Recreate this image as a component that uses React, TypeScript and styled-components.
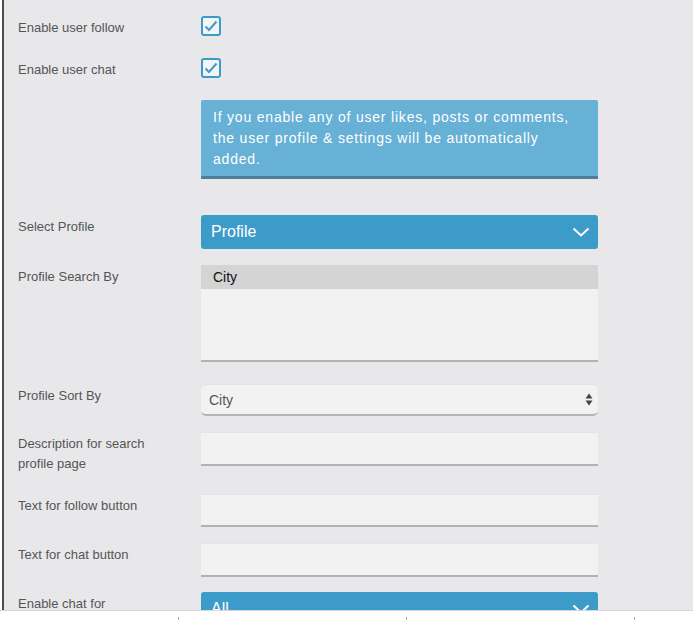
import React from "react";
import styled, { createGlobalStyle } from "styled-components";

const GlobalStyle = createGlobalStyle`
  html, body {
    margin: 0;
    padding: 0;
    background: #ffffff;
  }
  body {
    font-family: "Liberation Sans", Arial, sans-serif;
  }
`;

const Screen = styled.div`
  width: 693px;
  height: 620px;
  display: flex;
  flex-direction: column;
  overflow: hidden;
`;

const Panel = styled.div`
  height: 610px;
  flex-shrink: 0;
  overflow: hidden;
  background: #e8e8ea;
  margin-left: 2px;
  border-left: 2px solid #4d4d4d;
  padding: 16px 0 0 14px;
  box-sizing: border-box;
`;

const Row = styled.div<{ $after: number }>`
  display: grid;
  grid-template-columns: 183px 397px;
  align-items: start;
  margin-bottom: ${(p) => p.$after}px;
`;

const Label = styled.div`
  padding-top: 2px;
  font-size: 13px;
  line-height: 20px;
  color: #555555;
`;

const CheckBox = styled.span`
  width: 20px;
  height: 20px;
  box-sizing: border-box;
  border: 2px solid #3d9bcb;
  border-radius: 3px;
  background: #f4f4f4;
  display: flex;
  align-items: center;
  justify-content: center;
`;

const InfoBox = styled.div`
  background: #67b0d6;
  border-bottom: 3px solid #4b7f9c;
  border-radius: 2px 2px 0 0;
  padding: 7px 12px 6px 12px;
  color: #ffffff;
  font-size: 14px;
  line-height: 21px;
  letter-spacing: 0.8px;
`;

const BlueSelect = styled.div`
  height: 34px;
  background: #3d9bca;
  border-radius: 3px;
  display: flex;
  align-items: center;
  justify-content: space-between;
  padding: 0 8px 0 10px;
  color: #ffffff;
  font-size: 16px;
`;

const ListBox = styled.div`
  height: 97px;
  background: #f2f2f2;
  border-bottom: 2px solid #b2b2b2;
  box-sizing: border-box;
`;

const ListItem = styled.div<{ $selected?: boolean }>`
  height: 24px;
  line-height: 24px;
  padding-left: 12px;
  font-size: 14px;
  color: #111111;
  background: ${(p) => (p.$selected ? "#d4d4d4" : "transparent")};
`;

const PlainSelect = styled.div`
  height: 32px;
  box-sizing: border-box;
  background: #f2f2f2;
  border-radius: 5px;
  border-top: 1px solid #e2e2e2;
  border-bottom: 2px solid #b4b4b4;
  display: flex;
  align-items: center;
  justify-content: space-between;
  padding: 0 5px 0 8px;
  font-size: 14px;
  color: #555555;
`;

const TextInput = styled.div<{ $height: number }>`
  height: ${(p) => p.$height}px;
  box-sizing: border-box;
  background: #f2f2f2;
  border-top: 1px solid #e4e4e4;
  border-bottom: 2px solid #b2b2b2;
`;

const Footer = styled.div`
  flex: 1;
  background: #ffffff;
  border-top: 1px solid #d6d6d6;
  display: flex;
  padding-left: 178px;
`;

const Tick = styled.div`
  flex: 0 0 227px;
  height: 3px;
  margin-top: 6px;
  border-left: 1px solid #a8a8a8;
`;

const Check = () => (
  <svg width="14" height="12" viewBox="0 0 14 12">
    <polyline
      points="1.5,6.5 5,10 12.5,1.5"
      fill="none"
      stroke="#3d9bcb"
      strokeWidth="2"
    />
  </svg>
);

const Chevron = () => (
  <svg width="18" height="10" viewBox="0 0 18 10">
    <polyline
      points="1.5,1.5 9,8.5 16.5,1.5"
      fill="none"
      stroke="#ffffff"
      strokeWidth="2"
    />
  </svg>
);

const UpDown = () => (
  <svg width="8" height="13" viewBox="0 0 8 13">
    <polygon points="4,0.5 7.5,5.5 0.5,5.5" fill="#444444" />
    <polygon points="0.5,7.5 7.5,7.5 4,12.5" fill="#444444" />
  </svg>
);

export default function App() {
  return (
    <Screen>
      <GlobalStyle />
      <Panel>
        <Row $after={20}>
          <Label>Enable user follow</Label>
          <CheckBox>
            <Check />
          </CheckBox>
        </Row>
        <Row $after={20}>
          <Label>Enable user chat</Label>
          <CheckBox>
            <Check />
          </CheckBox>
        </Row>
        <Row $after={36}>
          <div />
          <InfoBox>
            If you enable any of user likes, posts or comments, the user
            profile &amp; settings will be automatically added.
          </InfoBox>
        </Row>
        <Row $after={16}>
          <Label>Select Profile</Label>
          <BlueSelect>
            <span>Profile</span>
            <Chevron />
          </BlueSelect>
        </Row>
        <Row $after={22}>
          <Label>Profile Search By</Label>
          <ListBox>
            <ListItem $selected>City</ListItem>
          </ListBox>
        </Row>
        <Row $after={16}>
          <Label>Profile Sort By</Label>
          <PlainSelect>
            <span>City</span>
            <UpDown />
          </PlainSelect>
        </Row>
        <Row $after={20}>
          <Label>
            Description for search
            <br />
            profile page
          </Label>
          <TextInput $height={34} />
        </Row>
        <Row $after={16}>
          <Label>Text for follow button</Label>
          <TextInput $height={33} />
        </Row>
        <Row $after={15}>
          <Label>Text for chat button</Label>
          <TextInput $height={34} />
        </Row>
        <Row $after={0}>
          <Label>Enable chat for</Label>
          <BlueSelect>
            <span>All</span>
            <Chevron />
          </BlueSelect>
        </Row>
      </Panel>
      <Footer>
        <Tick />
        <Tick />
        <Tick />
      </Footer>
    </Screen>
  );
}
